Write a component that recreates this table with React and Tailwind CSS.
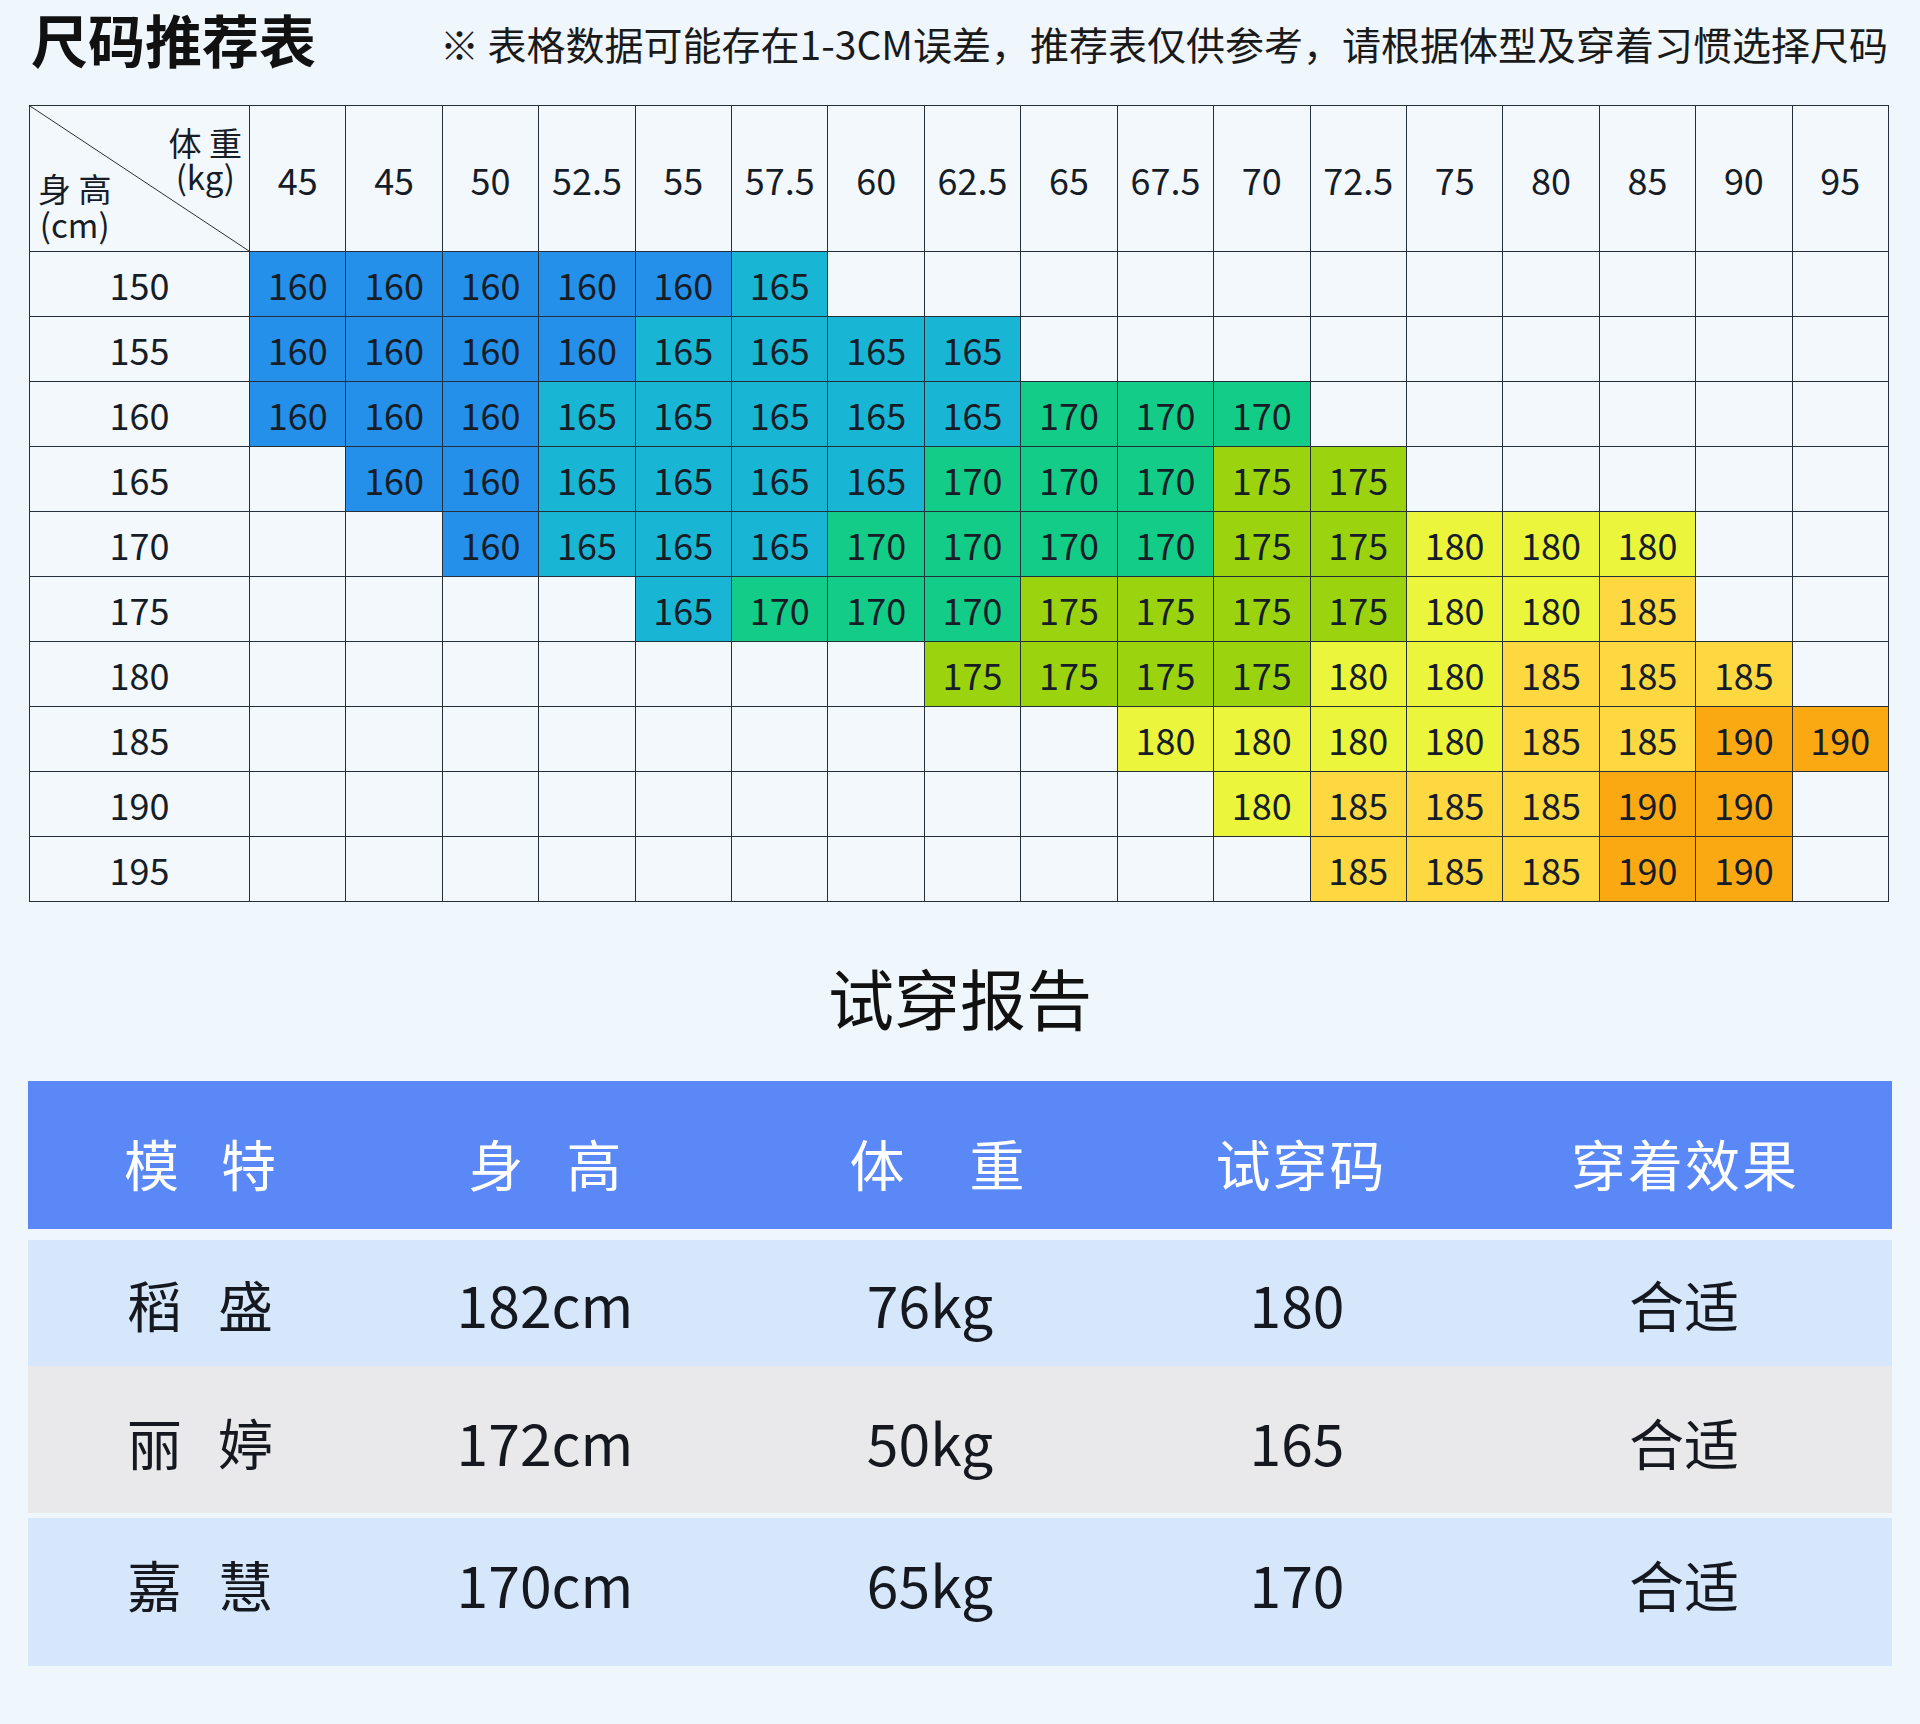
import React from 'react'

const weights = ['45', '45', '50', '52.5', '55', '57.5', '60', '62.5', '65', '67.5', '70', '72.5', '75', '80', '85', '90', '95']

// [height, first column index, sizes]
const rows = [
  ['150', 0, [160, 160, 160, 160, 160, 165]],
  ['155', 0, [160, 160, 160, 160, 165, 165, 165, 165]],
  ['160', 0, [160, 160, 160, 165, 165, 165, 165, 165, 170, 170, 170]],
  ['165', 1, [160, 160, 165, 165, 165, 165, 170, 170, 170, 175, 175]],
  ['170', 2, [160, 165, 165, 165, 170, 170, 170, 170, 175, 175, 180, 180, 180]],
  ['175', 4, [165, 170, 170, 170, 175, 175, 175, 175, 180, 180, 185]],
  ['180', 7, [175, 175, 175, 175, 180, 180, 185, 185, 185]],
  ['185', 9, [180, 180, 180, 180, 185, 185, 190, 190]],
  ['190', 10, [180, 185, 185, 185, 190, 190]],
  ['195', 11, [185, 185, 185, 190, 190]],
]

const sizeColor = {
  160: 'bg-[#2490e9]',
  165: 'bg-[#18b6d4]',
  170: 'bg-[#13cc87]',
  175: 'bg-[#9bd40f]',
  180: 'bg-[#ebf53c]',
  185: 'bg-[#fdd840]',
  190: 'bg-[#fba913]',
}

const models = [
  { name: ['稻', '盛'], height: '182cm', weight: '76kg', size: '180', fit: '合适', bg: 'bg-[#d6e7fb]', h: 'h-[126px]', pad: '' },
  { name: ['丽', '婷'], height: '172cm', weight: '50kg', size: '165', fit: '合适', bg: 'bg-[#e9e9eb]', h: 'h-[147px]', pad: 'pt-[4px]' },
  { name: ['嘉', '慧'], height: '170cm', weight: '65kg', size: '170', fit: '合适', bg: 'bg-[#d6e7fb]', h: 'h-[148px]', pad: 'mt-[5px] pb-[18px]' },
]

const cell = 'border-r border-b border-[#26303a] flex items-center justify-center'

function SizeChart() {
  return (
    <div className="ml-[29px] w-[1860px] grid grid-cols-[220px_repeat(17,minmax(0,1fr))] border-l border-t border-[#26303a] bg-[#f3f8fd] text-[36px] text-[#161d27] leading-none">
      {/* Corner */}
      <div className="relative h-[146px] border-r border-b border-[#26303a] grid">
        <svg className="absolute inset-0 w-full h-full" viewBox="0 0 100 100" preserveAspectRatio="none">
          <line x1="0" y1="0" x2="100" y2="100" stroke="#26303a" strokeWidth="1" vectorEffect="non-scaling-stroke" />
        </svg>
        <div className="col-start-1 row-start-1 self-start justify-self-end pt-[19px] pr-[7px] flex flex-col items-center text-[33px] leading-[34px]">
          <span>体 重</span>
          <span>(kg)</span>
        </div>
        <div className="col-start-1 row-start-1 self-end justify-self-start pb-[9px] pl-[8px] flex flex-col items-center text-[33px] leading-[36px]">
          <span>身 高</span>
          <span>(cm)</span>
        </div>
      </div>
      {weights.map((w, i) => (
        <div key={i} className={`h-[146px] ${cell}`}>{w}</div>
      ))}

      {rows.map(([label, start, sizes]) => (
        <React.Fragment key={label}>
          <div className={`h-[65px] ${cell}`}>{label}</div>
          {weights.map((_, i) => {
            const s = i >= start ? sizes[i - start] : undefined
            return (
              <div key={i} className={`h-[65px] ${cell} ${s ? sizeColor[s] : ''}`}>
                {s}
              </div>
            )
          })}
        </React.Fragment>
      ))}
    </div>
  )
}

function TryOnReport() {
  const grid = 'grid grid-cols-[344px_346px_414px_330px_1fr] items-center justify-items-center'
  return (
    <div className="mx-[28px]">
      <div className={`${grid} h-[148px] bg-[#5a88f6] text-white text-[55px] leading-none pt-[14px]`}>
        <span className="flex gap-[42px]"><span>模</span><span>特</span></span>
        <span className="flex gap-[43px]"><span>身</span><span>高</span></span>
        <span className="flex gap-[65px] pl-[24px]"><span>体</span><span>重</span></span>
        <span className="tracking-[2px] pl-[8px]">试穿码</span>
        <span className="tracking-[2px] pl-[16px]">穿着效果</span>
      </div>

      <div className="mt-[11px] flex flex-col">
        {models.map((m, i) => (
          <div
            key={i}
            className={`${grid} ${m.h} ${m.bg} ${m.pad} text-[57px] leading-none text-[#15191f]`}
          >
            <span className="flex gap-[36px] text-[55px]"><span>{m.name[0]}</span><span>{m.name[1]}</span></span>
            <span>{m.height}</span>
            <span className="pl-[10px]">{m.weight}</span>
            <span>{m.size}</span>
            <span className="text-[55px] pl-[14px]">{m.fit}</span>
          </div>
        ))}
      </div>
    </div>
  )
}

export default function App() {
  return (
    <div className="w-[1920px] h-[1724px] bg-[#eff6fc] font-['Noto_Sans_CJK_SC','Noto_Sans',sans-serif] text-[#161d27] overflow-hidden">
      {/* Title */}
      <div className="flex items-end justify-between pl-[31px] pr-[32px] pt-[4px]">
        <h1 className="text-[57px] leading-[1.2] font-bold text-[#111]">尺码推荐表</h1>
        <p className="text-[39px] leading-[1.2] text-[#1a1a1a] mb-[6px]">※ 表格数据可能存在1-3CM误差，推荐表仅供参考，请根据体型及穿着习惯选择尺码</p>
      </div>

      <div className="mt-[33px]">
        <SizeChart />
      </div>

      <h2 className="mt-[61px] text-center text-[66px] leading-none font-normal text-[#111]">试穿报告</h2>

      <div className="mt-[52px]">
        <TryOnReport />
      </div>
    </div>
  )
}
